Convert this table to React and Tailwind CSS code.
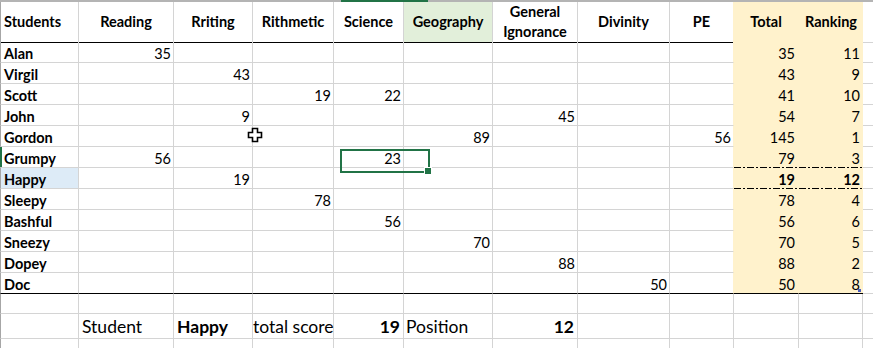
import React from "react";

const GRID =
  "grid grid-cols-[79px_95px_79px_81px_70px_89px_85px_92px_64px_65px_64px_10px]";

const rows = [
  ["Alan", { 1: 35 }, 35, 11],
  ["Virgil", { 2: 43 }, 43, 9],
  ["Scott", { 3: 19, 4: 22 }, 41, 10],
  ["John", { 2: 9, 6: 45 }, 54, 7],
  ["Gordon", { 5: 89, 8: 56 }, 145, 1],
  ["Grumpy", { 1: 56, 4: 23 }, 79, 3],
  ["Happy", { 2: 19 }, 19, 12],
  ["Sleepy", { 3: 78 }, 78, 4],
  ["Bashful", { 4: 56 }, 56, 6],
  ["Sneezy", { 5: 70 }, 70, 5],
  ["Dopey", { 6: 88 }, 88, 2],
  ["Doc", { 7: 50 }, 50, 8],
];

function DashDot() {
  return (
    <svg className="absolute left-0 -bottom-px h-px w-full" preserveAspectRatio="none">
      <line x1="0" y1="0.5" x2="100%" y2="0.5" stroke="#000" strokeWidth="1" strokeDasharray="7 2 2 2" />
    </svg>
  );
}

function Header() {
  const mid = [
    ["Reading", ""],
    ["Rriting", ""],
    ["Rithmetic", ""],
    ["Science", ""],
    ["Geography", "bg-[#e2efda]"],
    ["General Ignorance", ""],
    ["Divinity", ""],
  ];
  return (
    <div className={GRID + " h-[42px] border-t-2 border-t-[#b4b4b4]"}>
      <div className="flex items-center border-l border-r border-b border-l-[#a6a6a6] border-r-[#d4d4d4] border-b-black pl-[3px] font-bold">
        Students
      </div>
      {mid.map(([t, bg]) => (
        <div
          key={t}
          className={`flex items-center justify-center border-r border-b border-r-[#d4d4d4] border-b-black px-[4px] text-center font-bold leading-[20px] ${bg}`}
        >
          {t}
        </div>
      ))}
      <div className="flex items-center justify-center border-r border-b border-r-[#fff2cc] border-b-black font-bold">
        PE
      </div>
      <div className="flex items-center justify-center border-r border-b border-r-[#fff2cc] border-b-black bg-[#fff2cc] font-bold">
        Total
      </div>
      <div className="flex items-center justify-center border-b border-b-black bg-[#fff2cc] font-bold">
        Ranking
      </div>
      <div className="border-b border-b-[#d4d4d4]"></div>
    </div>
  );
}

function DataRow({ r, i }) {
  const [name, vals, total, rank] = r;
  const last = i === rows.length - 1;
  const happy = name === "Happy";
  const dashed = name === "Grumpy" || name === "Happy";
  const bb = last ? "border-b-black" : "border-b-[#d4d4d4]";
  const yb = last ? "border-b-black" : "border-b-[#fff2cc]";
  return (
    <div className={GRID + " h-[21px] leading-[17px]"}>
      <div
        className={`flex items-end border-l border-r border-b border-l-[#a6a6a6] border-r-[#d4d4d4] ${bb} pl-[3px] font-bold ${
          happy ? "bg-[#ddebf7]" : ""
        }`}
      >
        {name}
      </div>
      {[1, 2, 3, 4, 5, 6, 7, 8].map((c) => (
        <div
          key={c}
          className={`flex items-end justify-end border-r border-b pr-[2px] ${
            c === 8 ? "border-r-[#fff2cc]" : "border-r-[#d4d4d4]"
          } ${bb}`}
        >
          {vals[c] ?? ""}
        </div>
      ))}
      <div
        className={`relative flex items-end justify-end border-r border-b border-r-[#fff2cc] ${yb} bg-[#fff2cc] pr-[3px] ${
          happy ? "font-bold" : ""
        }`}
      >
        {total}
        {dashed && <DashDot />}
      </div>
      <div
        className={`relative flex items-end justify-end border-b ${yb} bg-[#fff2cc] pr-[3px] ${
          happy ? "font-bold" : ""
        }`}
      >
        {rank}
        {dashed && <DashDot />}
      </div>
      <div className="border-b border-b-[#d4d4d4]"></div>
    </div>
  );
}

function PlainRow({ h, cells = {}, noBottom }) {
  const idx = [0, 1, 2, 3, 4, 5, 6, 7, 8, 9, 10, 11];
  return (
    <div className={GRID + " " + h}>
      {idx.map((c) => {
        const cell = cells[c];
        return (
          <div
            key={c}
            className={`flex items-end whitespace-nowrap border-[#d4d4d4] ${
              noBottom ? "" : "border-b"
            } ${c === 11 ? "" : "border-r"} ${c === 0 ? "border-l border-l-[#a6a6a6]" : ""} ${
              cell ? cell.cls : ""
            }`}
          >
            {cell ? cell.t : ""}
          </div>
        );
      })}
    </div>
  );
}

function Cursor() {
  return (
    <svg
      className="absolute left-[247px] top-[127px]"
      width="16"
      height="16"
      viewBox="0 0 16 16"
    >
      <path
        d="M5.5 1.5 H10.5 V5.5 H14.5 V10.5 H10.5 V14.5 H5.5 V10.5 H1.5 V5.5 H5.5 Z"
        fill="#fff"
        stroke="#000"
        strokeWidth="1.6"
      />
    </svg>
  );
}

export default function App() {
  return (
    <div className="relative h-[348px] w-[873px] overflow-hidden bg-white font-['Lato',sans-serif] text-[14.5px] text-black">
      <Header />
      {rows.map((r, i) => (
        <DataRow key={r[0]} r={r} i={i} />
      ))}
      <PlainRow h="h-[20px]" />
      <PlainRow
        h="h-[25px] text-[17.5px] leading-[20px]"
        cells={{
          1: { t: "Student", cls: "pl-[3px] pb-[1px]" },
          2: { t: "Happy", cls: "pl-[3px] pb-[1px] font-bold" },
          3: { t: "total score", cls: "pl-0 pb-[1px]" },
          4: { t: "19", cls: "justify-end pr-[3px] pb-[1px] font-bold" },
          5: { t: "Position", cls: "pl-[2px] pb-[1px]" },
          6: { t: "12", cls: "justify-end pr-[3px] pb-[1px] font-bold" },
        }}
      />
      <PlainRow h="h-[10px]" noBottom />

      {/* selection indicators */}
      <div className="absolute left-[341px] top-0 h-[2px] w-[87px] bg-[#217346]"></div>
      <div className="absolute left-0 top-[147px] h-[20px] w-[2px] bg-[#217346]"></div>
      <div className="absolute left-[340px] top-[149px] h-[24px] w-[90px] border-2 border-[#217346]"></div>
      <div className="absolute left-[424px] top-[167px] h-[8px] w-[8px] border border-white bg-[#217346]"></div>
      <div className="absolute left-[858px] top-[289px] h-[3px] w-[3px] bg-[#4a5bbf]"></div>
      <Cursor />
    </div>
  );
}
